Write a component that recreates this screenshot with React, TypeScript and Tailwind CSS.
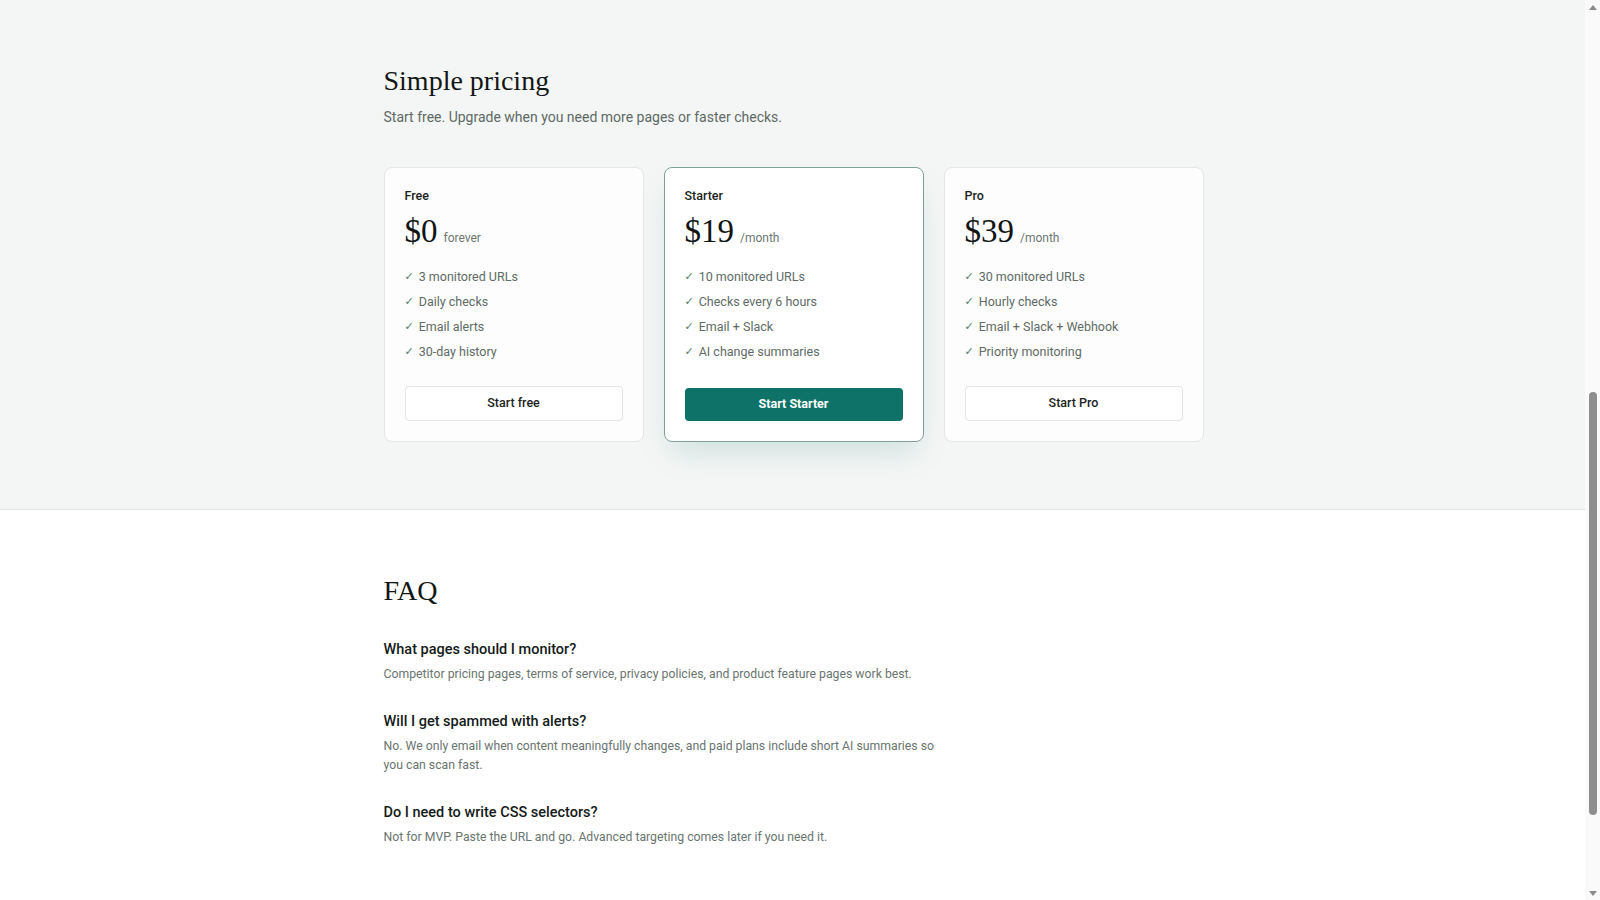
const plans = [
  {
    name: "Free",
    price: "$0",
    period: "forever",
    features: ["3 monitored URLs", "Daily checks", "Email alerts", "30-day history"],
    cta: "Start free",
    featured: false,
  },
  {
    name: "Starter",
    price: "$19",
    period: "/month",
    features: ["10 monitored URLs", "Checks every 6 hours", "Email + Slack", "AI change summaries"],
    cta: "Start Starter",
    featured: true,
  },
  {
    name: "Pro",
    price: "$39",
    period: "/month",
    features: ["30 monitored URLs", "Hourly checks", "Email + Slack + Webhook", "Priority monitoring"],
    cta: "Start Pro",
    featured: false,
  },
]

const faqs = [
  {
    q: "What pages should I monitor?",
    a: "Competitor pricing pages, terms of service, privacy policies, and product feature pages work best.",
  },
  {
    q: "Will I get spammed with alerts?",
    a: "No. We only email when content meaningfully changes, and paid plans include short AI summaries so you can scan fast.",
  },
  {
    q: "Do I need to write CSS selectors?",
    a: "Not for MVP. Paste the URL and go. Advanced targeting comes later if you need it.",
  },
]

const sans = "font-['Roboto','Liberation_Sans',sans-serif]"
const serif = "font-['Liberation_Serif','DejaVu_Serif',serif]"

function PlanCard({ plan }: { plan: (typeof plans)[number] }) {
  return (
    <div
      className={
        plan.featured
          ? "flex flex-col rounded-lg border border-[#7fa197] bg-white px-5 pt-[21px] pb-5 shadow-[0_16px_30px_-8px_rgba(15,118,110,0.18)]"
          : "flex flex-col rounded-lg border border-[#e3e7e5] bg-[#fdfdfd] px-5 pt-[21px] pb-5"
      }
    >
      <div className="text-[12.5px] font-medium leading-[14px] text-[#1c2421]">{plan.name}</div>
      <div className="mt-[10px] flex items-baseline gap-[6px]">
        <span className={`${serif} text-[33px] leading-[36px] text-[#111614]`}>{plan.price}</span>
        <span className="text-[12px] text-[#6d7672]">{plan.period}</span>
      </div>
      <ul className="mt-[16px] flex flex-col">
        {plan.features.map((f) => (
          <li key={f} className="flex h-[25px] items-center gap-[5px] text-[12.5px] text-[#606b66]">
            <span className="font-['DejaVu_Sans',sans-serif] text-[11px] text-[#4f7d70]">✓</span>
            <span>{f}</span>
          </li>
        ))}
      </ul>
      <button
        className={
          plan.featured
            ? "mt-[23px] h-[33px] rounded-[4px] bg-[#0e7268] text-[12.5px] font-bold text-white"
            : "mt-[21px] h-[35px] rounded-[4px] border border-[#e1e5e3] bg-white text-[12.5px] font-medium text-[#1c2421]"
        }
      >
        {plan.cta}
      </button>
    </div>
  )
}

function FakeScrollbar() {
  return (
    <div className="flex w-[15px] shrink-0 flex-col items-center bg-[#fafafa]">
      <div className="mt-[5px] h-0 w-0 border-x-[4px] border-b-[5px] border-x-transparent border-b-[#8a8a8a]" />
      <div className="mt-[382px] h-[423px] w-[8px] rounded-full bg-[#8e8e8e]" />
      <div className="flex-1" />
      <div className="mb-[4px] h-0 w-0 border-x-[4px] border-t-[5px] border-x-transparent border-t-[#8a8a8a]" />
    </div>
  )
}

export default function App() {
  return (
    <div className={`${sans} flex h-screen overflow-hidden bg-white`}>
      <main className="min-w-0 flex-1">
        <section className="border-b border-[#e2e6e4] bg-[#f4f6f5]">
          <div className="mx-auto w-[822px] pt-[64px] pb-[67px] pl-[2px]">
            <h2 className={`${serif} text-[28px] leading-[34px] text-[#121715]`}>Simple pricing</h2>
            <p className="mt-[9px] text-[14px] leading-[20px] text-[#5e6964]">
              Start free. Upgrade when you need more pages or faster checks.
            </p>
            <div className="mt-[40px] grid grid-cols-3 gap-5">
              {plans.map((p) => (
                <PlanCard key={p.name} plan={p} />
              ))}
            </div>
          </div>
        </section>
        <section className="bg-white">
          <div className="mx-auto w-[822px] pt-[64px] pb-[60px] pl-[2px]">
            <h2 className={`${serif} text-[28px] leading-[34px] text-[#121715]`}>FAQ</h2>
            <div className="mt-[31px] flex flex-col gap-[27px]">
              {faqs.map((f) => (
                <div key={f.q}>
                  <h3 className="text-[14.5px] font-medium leading-[22px] text-[#151b19]">{f.q}</h3>
                  <p className="mt-[4px] max-w-[553px] text-[12.25px] leading-[19px] text-[#6a7470]">{f.a}</p>
                </div>
              ))}
            </div>
          </div>
        </section>
      </main>
      <FakeScrollbar />
    </div>
  )
}
